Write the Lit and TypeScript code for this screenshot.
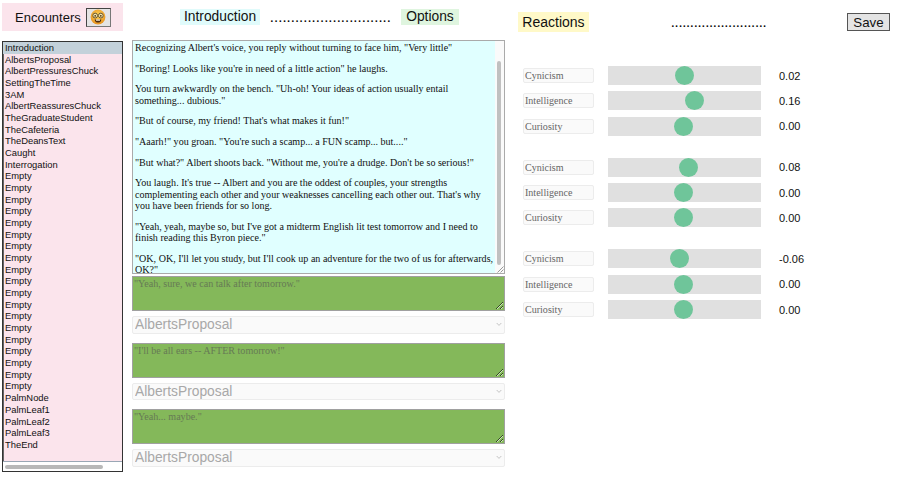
import { LitElement, html, css, svg } from "lit";
import { customElement } from "lit/decorators.js";

const ENCOUNTERS = [
  "Introduction", "AlbertsProposal", "AlbertPressuresChuck", "SettingTheTime", "3AM",
  "AlbertReassuresChuck", "TheGraduateStudent", "TheCafeteria", "TheDeansText", "Caught", "Interrogation",
  ...Array(19).fill("Empty"),
  "PalmNode", "PalmLeaf1", "PalmLeaf2", "PalmLeaf3", "TheEnd",
];

const STORY = [
  `Recognizing Albert's voice, you reply without turning to face him, "Very little"`,
  `"Boring! Looks like you're in need of a little action" he laughs.`,
  `You turn awkwardly on the bench. "Uh-oh! Your ideas of action usually entail something... dubious."`,
  `"But of course, my friend! That's what makes it fun!"`,
  `"Aaarh!" you groan. "You're such a scamp... a FUN scamp... but...."`,
  `"But what?" Albert shoots back. "Without me, you're a drudge. Don't be so serious!"`,
  `You laugh. It's true -- Albert and you are the oddest of couples, your strengths complementing each other and your weaknesses cancelling each other out. That's why you have been friends for so long.`,
  `"Yeah, yeah, maybe so, but I've got a midterm English lit test tomorrow and I need to finish reading this Byron piece."`,
  `"OK, OK, I'll let you study, but I'll cook up an adventure for the two of us for afterwards, OK?"`,
];

const OPTIONS = [
  `"Yeah, sure, we can talk after tomorrow."`,
  `"I'll be all ears -- AFTER tomorrow!"`,
  `"Yeah... maybe."`,
];

const REACTIONS = [
  [["Cynicism", 0.02], ["Intelligence", 0.16], ["Curiosity", 0]],
  [["Cynicism", 0.08], ["Intelligence", 0], ["Curiosity", 0]],
  [["Cynicism", -0.06], ["Intelligence", 0], ["Curiosity", 0]],
] as [string, number][][];

const nerdFace = svg`
  <svg viewBox="0 0 16 16" width="16" height="16" aria-hidden="true">
    <defs>
      <radialGradient id="face" cx="50%" cy="40%" r="60%">
        <stop offset="0%" stop-color="#ffd95a" />
        <stop offset="100%" stop-color="#e8921e" />
      </radialGradient>
    </defs>
    <circle cx="8" cy="8" r="7.4" fill="url(#face)" />
    <circle cx="5.2" cy="6.6" r="2.4" fill="#f7e7a8" stroke="#5a4a2a" stroke-width="0.9" />
    <circle cx="10.8" cy="6.6" r="2.4" fill="#f7e7a8" stroke="#5a4a2a" stroke-width="0.9" />
    <circle cx="5.2" cy="6.8" r="0.9" fill="#4a3414" />
    <circle cx="10.8" cy="6.8" r="0.9" fill="#4a3414" />
    <path d="M4.6 10.4h6.8c-.4 2.2-1.7 3.2-3.4 3.2s-3-1-3.4-3.2z" fill="#4a2a10" />
    <rect x="6" y="10.4" width="4" height="1.3" fill="#fff6d8" />
  </svg>
`;

@customElement("app-root")
export class AppRoot extends LitElement {
  static styles = css`
    :host {
      display: block;
      width: 900px;
      height: 483px;
      overflow: hidden;
      background: #fff;
      font-family: "Liberation Sans", Arial, sans-serif;
      color: #111;
    }
    .page {
      display: grid;
      grid-template-columns: 121px 373px 1fr;
      column-gap: 9px;
      padding: 3px 0 0 2px;
      box-sizing: border-box;
      height: 483px;
    }
    .left, .mid, .right {
      display: flex;
      flex-direction: column;
      min-width: 0;
    }

    /* left column */
    .left-head {
      height: 28px;
      background: #fbe4ec;
      display: flex;
      align-items: center;
      padding-left: 13px;
      gap: 5px;
      font-size: 13px;
      margin-bottom: 10px;
    }
    .face-btn {
      width: 25px;
      height: 19px;
      box-sizing: border-box;
      border: 1px solid #444;
      border-right-color: #777;
      border-bottom-color: #777;
      background: #e4e4e4;
      padding: 0;
      display: flex;
      align-items: center;
      justify-content: center;
    }
    .list {
      width: 121px;
      height: 431px;
      box-sizing: border-box;
      border: 1px solid #333;
      background: #fbe4ec;
      display: flex;
      flex-direction: column;
      box-shadow: inset 1px 1px 0 #666;
    }
    .rows {
      flex: 1;
      overflow: hidden;
    }
    .row {
      height: 11.68px;
      line-height: 11.68px;
      font-size: 9.4px;
      padding-left: 2px;
      white-space: nowrap;
    }
    .row.sel { background: #c3d1da; }
    .hbar {
      height: 9px;
      background: #fff;
      border-top: 1px solid #9aa7b5;
      display: flex;
      align-items: center;
      padding-left: 2px;
    }
    .hthumb {
      width: 98px;
      height: 4px;
      border-radius: 2px;
      background: #b8b8b8;
    }

    /* middle column */
    .mid-head {
      display: flex;
      align-items: center;
      padding-left: 48px;
      height: 16px;
      margin: 6px 0 15px;
      font-size: 13.8px;
    }
    .tag {
      padding: 0 4px;
      line-height: 16px;
      white-space: nowrap;
    }
    .intro { background: #e0fbfb; }
    .opts { background: #dff5df; margin-left: 10px; padding: 0 5px; }
    .dots {
      font-family: "Liberation Serif", serif;
      font-size: 14.5px;
      letter-spacing: 0.55px;
      color: #000;
      margin-left: 10px;
      line-height: 16px;
    }
    .story {
      position: relative;
      height: 234px;
      box-sizing: border-box;
      border: 1px solid #aaa;
      background: #e0ffff;
      padding: 1px 10px 0 1px;
      font-family: "Liberation Serif", serif;
      font-size: 10.05px;
      line-height: 11.3px;
      overflow: hidden;
      margin-bottom: 2px;
    }
    .story p { margin: 0 0 9.4px; padding-left: 1px; }
    .strack {
      position: absolute;
      top: 0;
      right: 0;
      bottom: 0;
      width: 9px;
      background: #fafafa;
    }
    .sthumb {
      position: absolute;
      top: 20px;
      left: 2px;
      width: 4px;
      height: 204px;
      border-radius: 2px;
      background: #c0c0c0;
    }
    .grip {
      position: absolute;
      right: 0;
      bottom: 0;
    }
    .opt {
      display: flex;
      flex-direction: column;
      gap: 5px;
      margin-bottom: 9px;
    }
    .opt textarea {
      display: block;
      box-sizing: border-box;
      width: 373px;
      height: 35px;
      margin: 0;
      padding: 1px 1px;
      border: 1px solid #a0a0a0;
      background: #84b85a;
      font-family: "Liberation Serif", serif;
      font-size: 10.05px;
      line-height: 11.3px;
      color: #667a55;
      outline: none;
    }
    .select-wrap {
      position: relative;
      height: 17.5px;
    }
    .select-wrap select {
      -webkit-appearance: none;
      appearance: none;
      display: block;
      box-sizing: border-box;
      width: 373px;
      height: 17.5px;
      margin: 0;
      padding: 0 0 0 2px;
      border: 1px solid #ececec;
      border-radius: 2px;
      background: #fafafa;
      font-family: "Liberation Sans", Arial, sans-serif;
      font-size: 13.8px;
      color: #a8a8a8;
      opacity: 1;
    }
    .chev {
      position: absolute;
      right: 3px;
      top: 6px;
      pointer-events: none;
    }

    /* right column */
    .right { padding-left: 4px; }
    .right-head {
      display: flex;
      align-items: flex-start;
      height: 20px;
      margin: 9px 0 34px;
    }
    .react-tag {
      background: #fff9c8;
      height: 20px;
      width: 71px;
      line-height: 20px;
      text-align: center;
      font-size: 14px;
    }
    .dots2 {
      font-family: "Liberation Serif", serif;
      font-size: 14.5px;
      letter-spacing: 0.2px;
      color: #000;
      margin: 0 0 0 82px;
      line-height: 20px;
      width: 176px;
    }
    .save {
      width: 43px;
      height: 18px;
      margin-top: 1px;
      box-sizing: border-box;
      border: 1px solid #555;
      background: #e4e4e4;
      padding: 0;
      font: 13.3px "Liberation Sans", Arial, sans-serif;
      color: #111;
    }
    .groups {
      display: flex;
      flex-direction: column;
      gap: 21.9px;
      padding-left: 5px;
    }
    .group {
      display: flex;
      flex-direction: column;
      gap: 6.4px;
    }
    .rx {
      display: grid;
      grid-template-columns: 71px 153px auto;
      column-gap: 14px;
      align-items: center;
      height: 19px;
    }
    .rx-label {
      box-sizing: border-box;
      height: 15px;
      line-height: 13px;
      padding-left: 1px;
      border: 1px solid #ececec;
      border-radius: 2px;
      background: #fafafa;
      font-family: "Liberation Serif", serif;
      font-size: 10.05px;
      color: #666;
    }
    .rx input {
      -webkit-appearance: none;
      appearance: none;
      display: block;
      width: 153px;
      height: 19px;
      margin: 0;
      background: #e0e0e0;
      outline: none;
    }
    .rx input::-webkit-slider-thumb {
      -webkit-appearance: none;
      appearance: none;
      width: 19px;
      height: 19px;
      border-radius: 50%;
      background: #6fc59a;
      border: none;
    }
    .rx-val {
      font-size: 11px;
      margin-left: 4px;
    }
  `;

  render() {
    return html`
      <div class="page">
        <section class="left">
          <div class="left-head">
            <span>Encounters</span>
            <button class="face-btn">${nerdFace}</button>
          </div>
          <div class="list">
            <div class="rows">
              ${ENCOUNTERS.map((n, i) => html`<div class="row ${i === 0 ? "sel" : ""}">${n}</div>`)}
            </div>
            <div class="hbar"><div class="hthumb"></div></div>
          </div>
        </section>

        <section class="mid">
          <div class="mid-head">
            <span class="tag intro">Introduction</span>
            <span class="dots">.............................</span>
            <span class="tag opts">Options</span>
          </div>
          <div class="story">
            ${STORY.map((p) => html`<p>${p}</p>`)}
            <div class="strack"><div class="sthumb"></div></div>
            <svg class="grip" width="8" height="8" viewBox="0 0 8 8" aria-hidden="true">
              <path d="M7.5 1.5 1.5 7.5M7.5 4.5 4.5 7.5" stroke="#999" stroke-width="1" fill="none" />
            </svg>
          </div>
          ${OPTIONS.map(
            (o) => html`
              <div class="opt">
                <textarea disabled .value=${o}></textarea>
                <div class="select-wrap">
                  <select disabled><option>AlbertsProposal</option></select>
                  <svg class="chev" width="6" height="5" viewBox="0 0 6 5" aria-hidden="true">
                    <path d="M.7 1 3 3.4 5.3 1" stroke="#c4c4c4" stroke-width="1" fill="none" />
                  </svg>
                </div>
              </div>
            `
          )}
        </section>

        <section class="right">
          <div class="right-head">
            <div class="react-tag">Reactions</div>
            <div class="dots2">.........................</div>
            <button class="save">Save</button>
          </div>
          <div class="groups">
            ${REACTIONS.map(
              (g) => html`
                <div class="group">
                  ${g.map(
                    ([name, v]) => html`
                      <div class="rx">
                        <div class="rx-label">${name}</div>
                        <input type="range" min="-1" max="1.03" step="0.01" .value=${String(v)} />
                        <div class="rx-val">${v.toFixed(2)}</div>
                      </div>
                    `
                  )}
                </div>
              `
            )}
          </div>
        </section>
      </div>
    `;
  }
}
